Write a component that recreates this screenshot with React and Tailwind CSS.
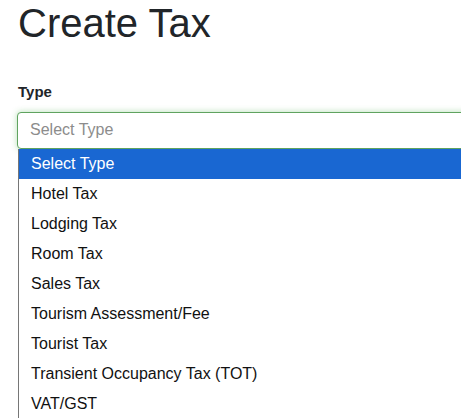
import React from "react";

const options = [
  "Hotel Tax",
  "Lodging Tax",
  "Room Tax",
  "Sales Tax",
  "Tourism Assessment/Fee",
  "Tourist Tax",
  "Transient Occupancy Tax (TOT)",
  "VAT/GST",
];

export default function App() {
  return (
    <div
      className="w-[461px] h-[418px] overflow-hidden bg-white pl-[18px]"
      style={{ fontFamily: '"Liberation Sans", Arial, sans-serif' }}
    >
      <h1 className="text-[40px] leading-[1.2] text-[#212529] font-normal -mt-[1px]">Create Tax</h1>
      <div className="mt-[34px]">
        <label className="block text-[15px] leading-[22.5px] font-bold text-[#212529]">Type</label>
        <div className="relative mt-[8px] -ml-[1px] w-[520px]">
          <div className="h-[37px] border border-[#5fa35f] rounded-[4px] shadow-[0_0_6px_rgba(92,184,92,0.45)] flex items-center pl-[12px] text-[16px] text-[#8c8c8c] bg-white">
            Select Type
          </div>
          <div className="absolute left-[1px] top-[37px] w-[520px] bg-white border-l border-[#767676] text-[16px] text-[#111]">
            <div className="h-[30px] flex items-center pl-[12px] bg-[#1967d2] text-white">Select Type</div>
            {options.map((o) => (
              <div key={o} className="h-[30px] flex items-center pl-[12px]">
                {o}
              </div>
            ))}
          </div>
        </div>
      </div>
    </div>
  );
}
